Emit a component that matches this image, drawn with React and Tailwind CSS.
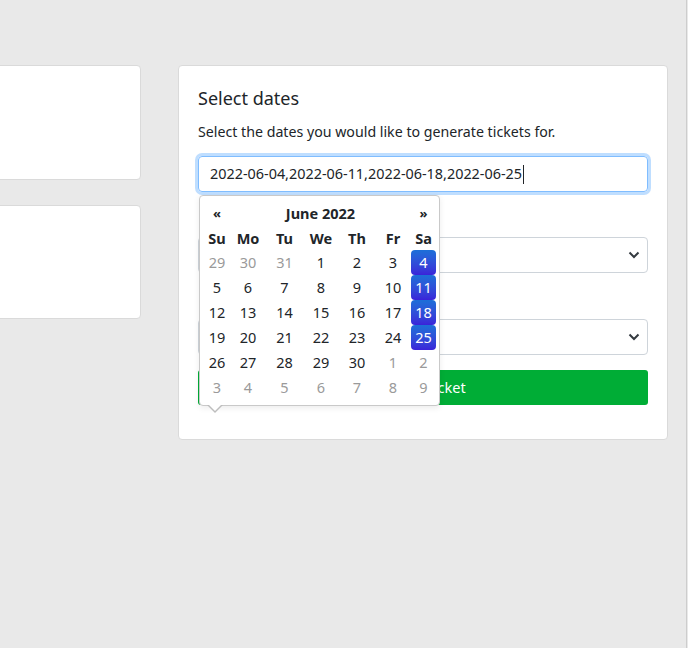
import React from "react";

const weeks = [
  [[29, 1], [30, 1], [31, 1], [1, 0], [2, 0], [3, 0], [4, 2]],
  [[5, 0], [6, 0], [7, 0], [8, 0], [9, 0], [10, 0], [11, 2]],
  [[12, 0], [13, 0], [14, 0], [15, 0], [16, 0], [17, 0], [18, 2]],
  [[19, 0], [20, 0], [21, 0], [22, 0], [23, 0], [24, 0], [25, 2]],
  [[26, 0], [27, 0], [28, 0], [29, 0], [30, 0], [1, 1], [2, 1]],
  [[3, 1], [4, 1], [5, 1], [6, 1], [7, 1], [8, 1], [9, 1]],
];
const dows = ["Su", "Mo", "Tu", "We", "Th", "Fr", "Sa"];

function Chevron() {
  return (
    <svg width="12" height="8" viewBox="0 0 12 8" className="mr-[7px]">
      <polyline points="1.5,1.5 6,6 10.5,1.5" fill="none" stroke="#343a40" strokeWidth="2" />
    </svg>
  );
}

function Calendar() {
  return (
    <div className="absolute left-px top-[39px] z-10 w-[241px] rounded-[4px] border border-[#c9c9c9] bg-white px-[4px] pb-[5px] pt-[4px] shadow-[0_2px_6px_rgba(0,0,0,0.08)]">
      <div className="grid grid-cols-[26px_36px_37px_36px_36px_36px_25px] text-[14.5px] leading-none text-[#212529]">
        <div className="flex h-[26px] items-center justify-center text-[13px] font-bold">«</div>
        <div className="col-span-5 flex h-[26px] items-center justify-center text-[14.5px] font-bold">June 2022</div>
        <div className="flex h-[26px] items-center justify-center text-[13px] font-bold">»</div>
        {dows.map((d) => (
          <div key={d} className="flex h-[24px] items-center justify-center font-bold">{d}</div>
        ))}
        {weeks.flat().map(([n, t], i) => (
          <div
            key={i}
            className={
              t === 2
                ? "flex h-[25px] items-center justify-center rounded-[4px] bg-gradient-to-b from-[#1c6fd8] to-[#3a22d9] text-white"
                : t === 1
                ? "flex h-[25px] items-center justify-center text-[#9a9a9a]"
                : "flex h-[25px] items-center justify-center"
            }
          >
            {n}
          </div>
        ))}
      </div>
      <div className="absolute left-[7px] top-full h-0 w-0 border-x-[8px] border-t-[8px] border-x-transparent border-t-[#bdbdbd]">
        <div className="absolute left-[-7px] top-[-9px] h-0 w-0 border-x-[7px] border-t-[7px] border-x-transparent border-t-white" />
      </div>
    </div>
  );
}

export default function App() {
  return (
    <div
      className="flex h-[648px] w-[688px] overflow-hidden bg-[#e9e9e9]"
      style={{ fontFamily: '"Noto Sans", "Open Sans", sans-serif' }}
    >
      <div className="flex flex-1 gap-[37px] pt-[65px]">
        <div className="ml-[-160px] flex w-[301px] flex-col gap-[25px]">
          <div className="h-[115px] rounded-[4px] border border-[#dadada] bg-white" />
          <div className="h-[114px] rounded-[4px] border border-[#dadada] bg-white" />
        </div>
        <div className="h-[375px] w-[490px] rounded-[4px] border border-[#dadada] bg-white px-[19px] pt-[20px]">
          <h2 className="text-[18px] leading-[24px] text-[#212529]">Select dates</h2>
          <p className="mt-[12px] text-[14.2px] leading-[20px] text-[#212529]">
            Select the dates you would like to generate tickets for.
          </p>
          <div className="relative mt-[14px]">
            <div className="flex h-[36px] items-center rounded-[4px] border border-[#80bdff] px-[11px] text-[14.4px] text-[#212529] shadow-[0_0_0_3px_rgba(0,123,255,0.25)]">
              <span>2022-06-04,2022-06-11,2022-06-18,2022-06-25</span>
              <span className="ml-px inline-block h-[19px] w-px bg-[#212529]" />
            </div>
            <Calendar />
          </div>
          <div className="mt-[45px] flex h-[36px] items-center justify-end rounded-[4px] border border-[#ced4da] bg-white">
            <Chevron />
          </div>
          <div className="mt-[46px] flex h-[36px] items-center justify-end rounded-[4px] border border-[#ced4da] bg-white">
            <Chevron />
          </div>
          <div className="mt-[15px] flex h-[35px] items-center justify-center rounded-[3px] bg-[#00ad36] text-[14.5px] text-white">
            Create ticket
          </div>
        </div>
      </div>
      <div className="h-full w-px bg-[#cdcdcd]" />
      <div className="h-full w-px" />
    </div>
  );
}
